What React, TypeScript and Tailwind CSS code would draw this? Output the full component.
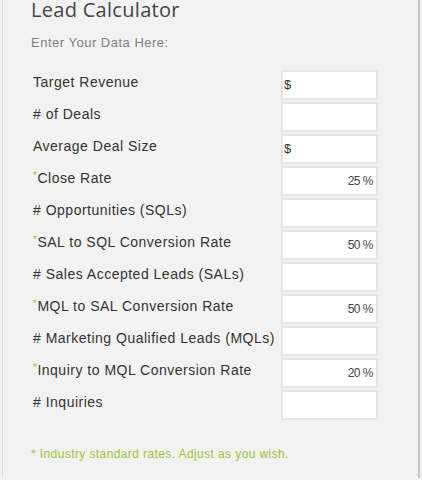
import React from "react";

const rows: { label: string; star?: boolean; prefix?: string; value?: string }[] = [
  { label: "Target Revenue", prefix: "$" },
  { label: "# of Deals" },
  { label: "Average Deal Size", prefix: "$" },
  { label: "Close Rate", star: true, value: "25 %" },
  { label: "# Opportunities (SQLs)" },
  { label: "SAL to SQL Conversion Rate", star: true, value: "50 %" },
  { label: "# Sales Accepted Leads (SALs)" },
  { label: "MQL to SAL Conversion Rate", star: true, value: "50 %" },
  { label: "# Marketing Qualified Leads (MQLs)" },
  { label: "Inquiry to MQL Conversion Rate", star: true, value: "20 %" },
  { label: "# Inquiries" },
];

export default function App() {
  return (
    <div
      className="w-[422px] h-[480px] bg-[#f2f2f2] overflow-hidden"
      style={{ fontFamily: '"Liberation Sans", Arial, sans-serif' }}
    >
      <div className="ml-[2px] w-[418px] h-full border-l border-l-[#dcdcdc] border-r-2 border-r-[#c4c4c4] pl-[28px]">
        <div className="-mt-[2px] text-[20px] leading-[24px] text-[#444] tracking-[0.3px]" style={{ fontFamily: '"Open Sans", sans-serif' }}>
          Lead Calculator
        </div>
        <div className="mt-[14px] text-[13px] leading-[14px] text-[#808080] tracking-[0.5px]">
          Enter Your Data Here:
        </div>
        <div className="mt-[22px] flex flex-col gap-[6px]">
          {rows.map((r) => (
            <div key={r.label} className="flex items-center h-[26px]">
              <div className="w-[252px] pl-[2px] text-[14px] text-[#333] tracking-[0.5px] -mt-[6px] whitespace-nowrap">
                {r.star && <span className="text-[#9cc33a] text-[10px] align-top">*</span>}
                {r.label}
              </div>
              <div className="w-[93px] h-[26px] bg-white outline-2 outline-[#e6e6e6] flex items-center text-[12px] text-[#444]">
                {r.prefix && <span className="pl-[1px] text-[13px] text-[#333]">{r.prefix}</span>}
                {r.value && <span className="ml-auto pr-[3px] tracking-[-0.5px]">{r.value}</span>}
              </div>
            </div>
          ))}
        </div>
        <div className="mt-[27px] text-[12px] text-[#9cc33a] tracking-[0.4px]">
          * Industry standard rates. Adjust as you wish.
        </div>
      </div>
    </div>
  );
}
